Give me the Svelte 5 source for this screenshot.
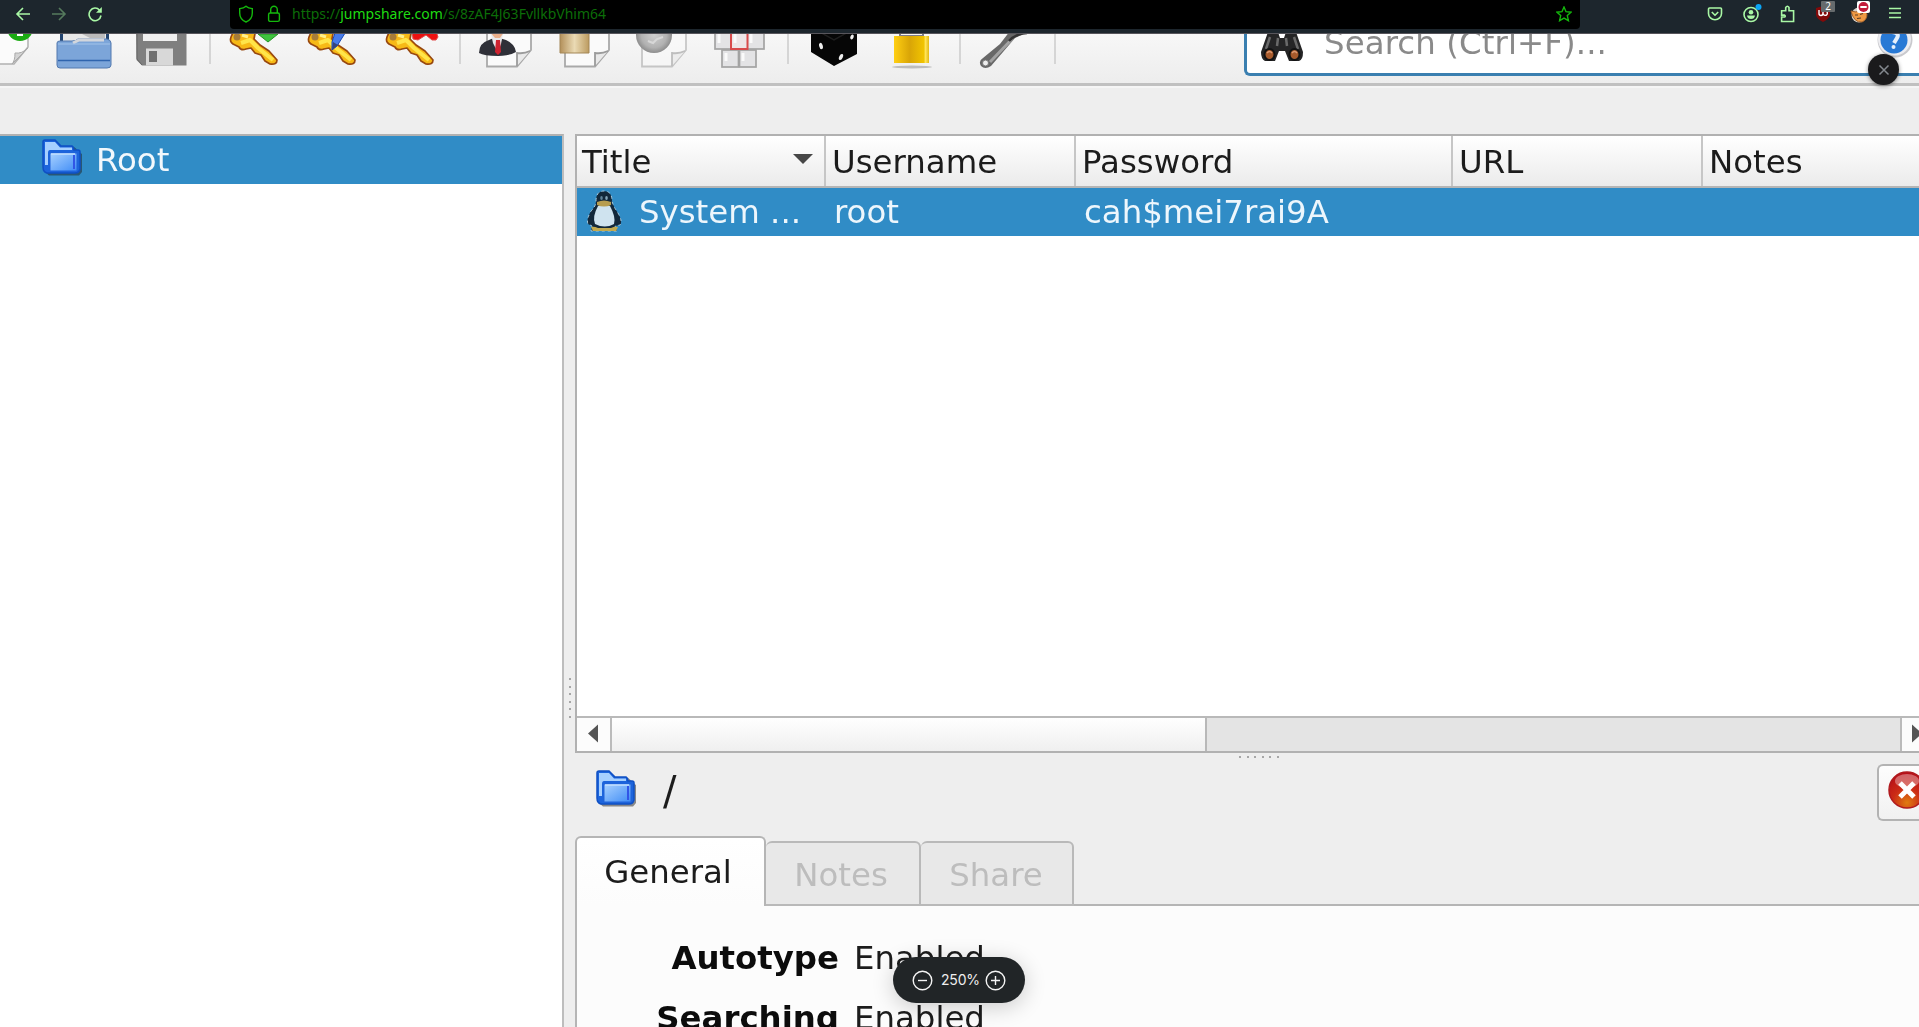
<script>
  const columns = [
    { label: 'Title', cls: 'c-title' },
    { label: 'Username', cls: 'c-user' },
    { label: 'Password', cls: 'c-pass' },
    { label: 'URL', cls: 'c-url' },
    { label: 'Notes', cls: 'c-notes' }
  ];
  const details = [
    { label: 'Autotype', value: 'Enabled' },
    { label: 'Searching', value: 'Enabled' }
  ];
  // Toolbar slots tile the row; every viewBox starts where the slot does.
  const tools = [
    { id: 'new', x: 0, w: 46 },
    { id: 'open', x: 46, w: 78 },
    { id: 'save', x: 124, w: 84 },
    { id: 'sep', x: 208, w: 4 },
    { id: 'key', mark: 'add', x: 212, w: 78 },
    { id: 'key', mark: 'edit', x: 290, w: 78 },
    { id: 'key', mark: 'delete', x: 368, w: 90 },
    { id: 'sep', x: 458, w: 4 },
    { id: 'user', x: 462, w: 80 },
    { id: 'clip', x: 542, w: 78 },
    { id: 'globe', x: 620, w: 78 },
    { id: 'type', x: 698, w: 88 },
    { id: 'sep', x: 786, w: 4 },
    { id: 'dice', x: 790, w: 84 },
    { id: 'lock', x: 874, w: 84 },
    { id: 'sep', x: 958, w: 4 },
    { id: 'wrench', x: 962, w: 91 },
    { id: 'sep', x: 1053, w: 4 }
  ];
  const dots = [0, 1, 2, 3, 4, 5];
</script>

{#snippet folder()}
  <svg class="folder" width="42" height="38" viewBox="0 0 42 38">
    <defs>
      <linearGradient id="fold" x1="0" y1="0" x2="1" y2="1">
        <stop offset="0" stop-color="#a9d2ff" /><stop offset="1" stop-color="#3f8cf6" />
      </linearGradient>
    </defs>
    <path d="M4 5Q4 4 6 4H16L21 9H33Q35 10 37 13L41 16V34L38 37.500H8L4 34Z" fill="#222" opacity=".5" />
    <path d="M2 4Q2 2 4 2H14L20 8H31Q33 9 33 12H37Q39 12 39 14V31Q38 35 34 35H6Q2 34 2 29Z" fill="#1c64dc" stroke="#0f50c4" stroke-width="1.5" />
    <path d="M4 4H14L19 9.500H31V12H9Q7 12 7 15V27H4Z" fill="#a6d0ff" />
    <path d="M9 15H36V33H9Z" fill="url(#fold)" stroke="#2162d8" />
    <path d="M10 16H34" stroke="#c3e0ff" stroke-width="1.5" />
    <path d="M33 17V31" stroke="#3155e6" stroke-width="2" />
  </svg>
{/snippet}

{#snippet page(x)}
  <path d="M{x} 30V66.5H{x + 30}L{x + 44} 50V30Z" fill="#fafafa" stroke="#a9a9a9" stroke-width="1.8" />
  <path d="M{x + 30} 66V53Q{x + 37} 54 {x + 43} 51" fill="#e9e9e9" stroke="#9b9b9b" stroke-width="1.8" />
{/snippet}

<div class="window">
  <header class="browser">
    <nav class="nav">
      <svg width="16" height="16" viewBox="0 0 16 16"><path d="M15 8H2M8 2L2 8L8 14" /></svg>
      <svg class="dim" width="16" height="16" viewBox="0 0 16 16"><path d="M1 8H14M8 2L14 8L8 14" /></svg>
      <svg width="16" height="16" viewBox="0 0 16 16"><path d="M12.6 4.2A6 6.3 0 1 0 14 9.5" /><path d="M14.8 1V6.8H9Z" class="solid" /></svg>
    </nav>
    <div class="url">
      <svg width="16" height="18" viewBox="0 0 16 18"><path d="M8 1.2C6 3 4 3.4 1.7 3.6V8C1.7 12.5 4.6 15.6 8 17C11.4 15.6 14.3 12.5 14.3 8V3.6C12 3.4 10 3 8 1.2Z" /></svg>
      <svg width="14" height="18" viewBox="0 0 14 18"><rect x="1.6" y="8" width="10.8" height="8.4" rx="1.6" /><path d="M3.7 8V4.7A3.3 3.5 0 0 1 10.3 4.7V8" /></svg>
      <span class="address">https://<b>jumpshare.com</b>/s/8zAF4J63FvllkbVhim64</span>
      <svg class="star" width="16" height="16" viewBox="0 0 16 16"><path d="M8 1L10 5.7L15 6.2L11.3 9.6L12.4 14.7L8 12.1L3.6 14.7L4.7 9.6L1 6.2L6 5.7Z" /></svg>
    </div>
    <div class="ext">
      <svg width="16" height="20" viewBox="0 0 16 20"><path d="M2.5 4H13.5Q14.5 4 14.5 5V9.5A6.5 6.2 0 0 1 1.5 9.5V5Q1.5 4 2.5 4ZM4.8 8L8 11.2L11.2 8" /></svg>
      <svg width="20" height="26" viewBox="0 0 20 26"><circle cx="9" cy="13.500" r="7" /><circle class="solid" cx="9" cy="11.2" r="2.3" /><path class="solid" d="M5 14.500H13Q12.500 18 9 18Q5.500 18 5 14.500Z" /><circle class="dot" cx="16.5" cy="6" r="3" /></svg>
      <svg width="16" height="20" viewBox="0 0 16 20"><path d="M1.6 17.500V13H4.5Q6 12.3 4.5 11.1H1.6V6.8H5.7V3.500Q7.4 1.1 9 3.500V6.8H13.6V17.500Z" /></svg>
      <div class="shield">
        <svg width="16" height="18" viewBox="0 0 16 18"><path class="red" d="M8 1L15 3V10Q14 14 8 17Q2 14 1 10V3Z" /><path class="ub" d="M4 5V8.500Q4 10.500 6 10.500Q8 10.500 8 8M8 5V8A2.2 2.2 0 1 0 10 6" /></svg>
        <span class="count">2</span>
      </div>
      <svg class="fox" width="20" height="24" viewBox="0 0 20 24"><circle cx="9" cy="14" r="7.5" style:fill="#d9d2c8" style:stroke="none" /><path style:fill="#ee9a45" style:stroke="#a56229" style:stroke-width="1" d="M1 10L6 11L12 8L17 13Q17 19 12 21Q4 22 1 10Z" /><path style:stroke="#5a3c24" style:stroke-width="1.1" d="M5 14H8M10 13.500L13 12.500M7 17.500L11 17" /><rect style:fill="#fff" style:stroke="none" x="7" y="0" width="13" height="12" rx="2" /><circle style:fill="#c21a3a" style:stroke="none" cx="13.5" cy="6" r="5" /><path style:stroke="#fff" style:stroke-width="2" d="M10.3 6H16.7" /></svg>
      <svg width="14" height="14" viewBox="0 0 14 14"><path d="M1 2.5H13M1 7H13M1 11.5H13" /></svg>
    </div>
  </header>

  <main class="viewer">
    <div class="photo">
      <div class="toolbar">
        {#each tools as t}
          <svg width={t.w} height="49" viewBox="{t.x} 34 {t.w} 49">
            {#if t.id === 'new'}
              <path d="M-10 20V64H14L28 47V20Z" fill="#fbfbfb" stroke="#b1b1b1" stroke-width="1.5" />
              <path d="M12 64Q15 61 15 53Q22 54 28 48Z" fill="#d4d4d4" stroke="#aaa" />
              <circle cx="20" cy="28" r="13" fill="#1bab12" /><path d="M20 22V36M13 29H27" stroke="#fff" stroke-width="6" />
            {:else if t.id === 'open'}
              <rect x="60" y="24" width="49" height="25" fill="#23446f" /><path d="M63 28H106V48H63Z" fill="#e8e8e8" /><path d="M82 34H105V38H90Z" fill="#bbb" />
              <path d="M57 43Q57 41 60 41H72Q76 41 78 39H107Q111 40 111 43V65Q111 68 107 68H60Q57 68 57 65Z" fill="#7ca5d9" stroke="#5279ae" />
              <path d="M73 43L79 40H104" stroke="#d3d6dc" stroke-width="3" fill="none" /><path d="M58 60.5H110" stroke="#2f64ae" stroke-width="1.5" /><path d="M58 44H110" stroke="#a3c4ea" />
            {:else if t.id === 'save'}
              <path d="M136 25H186.500V65.500H142L136.500 60Z" fill="#7f7f7f" /><path d="M137 25V59L142 65" stroke="#666" fill="none" />
              <rect x="143" y="25" width="34" height="16" fill="#efefef" /><rect x="146" y="48.500" width="27" height="17" fill="#d8d8d8" /><rect x="149" y="51" width="8" height="11" fill="#707070" />
            {:else if t.id === 'sep'}
              <path d="M{t.x + 2} 34V64" stroke="#cbcbcb" stroke-width="1.5" />
            {:else if t.id === 'key'}
              <g transform="translate({t.x} 34)">
                {#if t.mark === 'add'}<path d="M46 0H66L56 8Z" fill="#3fc33f" stroke="#239323" />{/if}
                {#if t.mark === 'delete'}<path d="M44 -3H68L70 3L68 6L64 6L58 1L50 6L45 5Z" fill="#ec1111" stroke="#e04a4a" />{/if}
                <path d="M24 -8L19 3Q17 9 23 11L27 13Q29 17 34 15L39 14L43 19L49 21L53 27L58 30Q65 31 65 26L57 17L48 11L42 5L44 -6Z" fill="#f7b916" stroke="#98480f" stroke-width="1.700" stroke-linejoin="round" />
                <path d="M29 9L38 6L46 14L61 26" stroke="#ffe54a" stroke-width="4" fill="none" stroke-linejoin="round" /><circle cx="25" cy="3" r="3.500" fill="#a77c38" /><path d="M30 1L36 3" stroke="#fff08a" stroke-width="3" />
                {#if t.mark === 'edit'}<path d="M46 -4H57L47 12L42 16V8Z" fill="#477bea" stroke="#1749b5" /><path d="M42 16L43 8L48 11Z" fill="#36457b" />{/if}
              </g>
            {:else if t.id === 'user'}
              {@render page(487)}
              <path d="M479 53Q479 43 489 40L496 37L506 40Q515 44 516 52Q510 56 498 56Q484 56 479 53Z" fill="#2f3038" /><path d="M491 34H503L501 44L498 53L493 43Z" fill="#e8e8ea" /><path d="M496 40H500L501 52L498 55L495 52Z" fill="#cf2330" /><path d="M490 32H504L500 38H495Z" fill="#e9af8b" />
            {:else if t.id === 'clip'}
              {@render page(565)}
              <defs><linearGradient id="tan"><stop offset="0" stop-color="#b3905a" /><stop offset=".5" stop-color="#eadab4" /><stop offset="1" stop-color="#bc9b60" /></linearGradient></defs>
              <path d="M560 24H589V53H560Z" fill="url(#tan)" stroke="#a38657" />
            {:else if t.id === 'globe'}
              <g opacity=".6">{@render page(642)}</g>
              <defs><radialGradient id="ball"><stop offset="0" stop-color="#cfcfcf" /><stop offset=".7" stop-color="#b2b2b2" /><stop offset="1" stop-color="#8d8d8d" /></radialGradient></defs>
              <circle cx="654" cy="35" r="18" fill="url(#ball)" /><path d="M648 41L653 43L657 39L663 37" stroke="#d8d8d8" stroke-width="2" fill="none" />
            {:else if t.id === 'type'}
              <g fill="#e3e3e5" stroke="#a3a3a3" stroke-width="1.700"><rect x="715" y="29" width="17" height="20" /><rect x="747" y="29" width="17" height="20" /><rect x="722" y="50" width="16.500" height="17" /><rect x="739.500" y="50" width="16.500" height="17" /></g>
              <rect x="731" y="29" width="16.500" height="20" fill="#eee5e6" stroke="#d84a4b" stroke-width="2" /><path d="M719 34V43M726 53V61M743 53V61M751 34V43M735 34V43" stroke="#fafafa" stroke-width="3" />
            {:else if t.id === 'dice'}
              <path d="M811 25L834 34L857 25V54L834 66L811 52Z" fill="#060606" /><path d="M811 27L834 40L857 27" stroke="#1e1e1e" stroke-width="1.500" fill="none" />
              <g fill="#eee"><ellipse cx="821" cy="46" rx="1.800" ry="3.200" transform="rotate(-15 821 46)" /><ellipse cx="841" cy="57" rx="1.800" ry="3.200" transform="rotate(25 841 57)" /><ellipse cx="852" cy="37" rx="1.600" ry="2.500" transform="rotate(25 852 37)" /></g>
            {:else if t.id === 'lock'}
              <defs><linearGradient id="gold"><stop offset="0" stop-color="#ffcf12" /><stop offset=".45" stop-color="#d9a507" /><stop offset=".85" stop-color="#f1c400" /><stop offset=".9" stop-color="#ffe45a" /><stop offset="1" stop-color="#e3b913" /></linearGradient></defs>
              <path d="M900 31V36H923V31" fill="none" stroke="#7e7d8b" stroke-width="2" /><rect x="894" y="36" width="35" height="27" fill="url(#gold)" /><ellipse cx="912" cy="67" rx="20" ry="1.500" fill="#bdbdbd" />
            {:else if t.id === 'wrench'}
              <path d="M1010 31H1030L1015 38L991 66Q985 70 981 66Q978 61 983 58L1000 44Z" fill="#686868" /><path d="M1013 38L990 62" stroke="#a2a2a2" stroke-width="3" /><path d="M1027 33Q1015 34 1009 41" stroke="#333" stroke-width="2.500" fill="none" /><circle cx="985.500" cy="63" r="3" fill="#eee" stroke="#777" />
            {/if}
          </svg>
        {/each}
        <div class="search">
          <svg class="binoculars" width="44" height="32" viewBox="0 0 44 32">
            <path d="M8 -2H18L20 4H24L26 -2H36L43 18Q43 26 39 27H29L25 17H19L15 27H5Q1 25 1 18Z" fill="#252526" /><path d="M10 3L6 15M34 3L38 15M18 4L17 12M26 4L27 12" stroke="#6a6a6a" stroke-width="2.500" /><ellipse cx="9.500" cy="20.500" rx="5" ry="5.500" fill="#a65a2c" stroke="#121212" stroke-width="2" /><ellipse cx="34.500" cy="20.500" rx="5" ry="5.500" fill="#a65a2c" stroke="#121212" stroke-width="2" /><path d="M7 19Q9.500 16 12 19M32 19Q34.500 16 37 19" stroke="#dc9a72" fill="none" stroke-width="1.500" />
          </svg>
          <span>Search (Ctrl+F)...</span>
          <svg class="help" width="44" height="30" viewBox="0 0 44 30">
            <circle cx="22" cy="6" r="17.500" fill="#c9c9cd" /><circle cx="21.500" cy="5" r="16.500" fill="#ededf1" /><circle cx="21" cy="6" r="13.500" fill="#2879d5" /><path d="M19 -2Q27 -1 24 4L21 9" stroke="#e6f0fc" stroke-width="4" fill="none" /><circle cx="20.500" cy="13" r="2" fill="#e6f0fc" />
          </svg>
        </div>
      </div>

      <div class="split">
        <aside class="groups">
          <div class="group">{@render folder()}<span>Root</span></div>
        </aside>
        <div class="grip-v">{#each dots as d}<i></i>{/each}</div>
        <section class="right">
          <div class="table">
            <div class="head">
              {#each columns as c}
                <div class="cell {c.cls}"><span>{c.label}</span>{#if c.label === 'Title'}<svg width="20" height="10" viewBox="0 0 20 10"><path d="M0 0H20L10 10Z" fill="#474747" /></svg>{/if}</div>
              {/each}
            </div>
            <div class="row">
              <div class="cell c-title">
                <svg class="tux" width="36" height="42" viewBox="0 0 36 42">
                  <path d="M10 11Q10 1 18 1Q26 1 26 11Q27 16 32 23Q37 32 34 35L29 36L31 41H5L6 36L2 34Q0 30 5 21Q10 16 10 11Z" fill="#13283a" stroke="#a9c9dc" stroke-width="1" stroke-dasharray="3 3" />
                  <path d="M12 16Q18 13 24 16Q30 27 28 34Q19 39 9 34Q6 27 12 16Z" fill="#cfe3ef" /><ellipse cx="15.500" cy="8" rx="1.300" ry="2" fill="#5f8298" /><ellipse cx="20.500" cy="8" rx="1.300" ry="2" fill="#86a6b8" /><path d="M11 12Q18 9 25 12V15Q18 18 11 15Z" fill="#b79d4f" /><path d="M5 37Q8 36 12 38H25Q29 36 32 37L30 41H7Z" fill="#c2a94e" />
                </svg>
                <span>System ...</span>
              </div>
              <div class="cell c-user"><span>root</span></div>
              <div class="cell c-pass"><span>cah$mei7rai9A</span></div>
            </div>
            <div class="empty"></div>
            <div class="scroll">
              <div class="arrow"><svg width="10" height="19" viewBox="0 0 11 20"><path d="M11 0V20L0 10Z" fill="#555" /></svg></div>
              <div class="thumb"></div>
              <div class="groove"></div>
              <div class="arrow last"><svg width="10" height="19" viewBox="0 0 11 20"><path d="M0 0V20L11 10Z" fill="#555" /></svg></div>
            </div>
          </div>
          <div class="grip-h">{#each dots as d}<i></i>{/each}</div>
          <div class="path">
            {@render folder()}
            <span>/</span>
            <div class="close-pane">
              <svg width="40" height="40" viewBox="0 0 40 40">
                <defs><radialGradient id="warm" cx=".5" cy=".85" r=".8"><stop offset="0" stop-color="#e07c10" /><stop offset=".5" stop-color="#cb2b16" /><stop offset="1" stop-color="#b80f18" /></radialGradient></defs>
                <circle cx="20" cy="20" r="18" fill="url(#warm)" stroke="#b01a1e" stroke-width="1.500" /><ellipse cx="20" cy="11" rx="12" ry="7" fill="#fff" opacity=".35" /><path d="M13 13L27 27M27 13L13 27" stroke="#fff" stroke-width="5" />
              </svg>
            </div>
          </div>
          <div class="tabs">
            <div class="tab active">General</div>
            <div class="tab notes">Notes</div>
            <div class="tab share">Share</div>
            <div class="rest"></div>
          </div>
          <div class="panel">
            {#each details as d}
              <div class="detail"><strong>{d.label}</strong><span>{d.value}</span></div>
            {/each}
          </div>
        </section>
      </div>
    </div>

    <button class="close" aria-label="Close"><svg width="12" height="12" viewBox="0 0 12 12"><path d="M1.500 1.500L10.500 10.500M10.500 1.500L1.500 10.500" stroke="#84898f" stroke-width="1.500" /></svg></button>
    <div class="zoom">
      <svg width="21" height="21" viewBox="0 0 21 21"><circle cx="10.500" cy="10.500" r="9.300" /><path d="M6 10.500H15" /></svg>
      <span>250%</span>
      <svg width="21" height="21" viewBox="0 0 21 21"><circle cx="10.500" cy="10.500" r="9.300" /><path d="M6 10.500H15M10.500 6V15" /></svg>
    </div>
  </main>
</div>

<style>
  :global(body) { margin: 0; overflow: hidden; background: #eee; }
  .window { width: 1919px; height: 1027px; display: flex; flex-direction: column; overflow: hidden; }
  svg { display: block; flex: none; }

  .browser { height: 33px; flex: none; display: flex; background: #1d262d; border-bottom: 1px solid #57555b; font-family: "Noto Sans", sans-serif; }
  .browser svg { fill: none; stroke: #a9f8a5; stroke-width: 1.6; }
  .browser .solid { fill: #a9f8a5; stroke: none; }
  .browser .dot { fill: #0aa5f5; stroke: none; }
  .browser .red { fill: #820a0a; stroke: none; }
  .browser .ub { stroke: #fff; stroke-width: 1.4; }
  .nav { width: 215px; padding-left: 15px; display: flex; gap: 20px; height: 27px; align-items: center; }
  .browser .dim { opacity: .4; }
  .url { width: 1334px; height: 29px; background: #000; border-radius: 0 0 4px 4px; padding: 0 8px; display: flex; align-items: center; }
  .browser .url svg { stroke: #14b80c; stroke-width: 1.4; margin-bottom: 2px; }
  .url svg + svg { margin-left: 13px; }
  .address { margin-left: 11px; color: #0c6d08; font-size: 14px; line-height: 27px; height: 29px; flex: 1; white-space: nowrap; }
  .address b { font-weight: 400; color: #1fdc12; }
  .ext { flex: 1; height: 27px; display: flex; align-items: center; padding-left: 127px; gap: 20px; }
  .ext svg:nth-child(2) { margin-left: -1px; }
  .ext svg:nth-child(3) { margin-left: -2px; }
  .ext .shield { margin-left: -1px; }
  .ext .fox { margin-left: -1px; margin-bottom: 2px; }
  .ext > svg:last-child { margin-left: -2px; margin-bottom: 1px; }
  .shield { position: relative; }
  .count { position: absolute; left: 6px; top: -4px; width: 14px; height: 11px; border-radius: 1px; background: #666b6d; color: #fff; font-size: 10px; line-height: 10px; text-align: center; }

  .viewer { position: relative; height: 993px; flex: none; overflow: hidden; background: #eee; }
  .photo { height: 993px; display: flex; flex-direction: column; font-family: "DejaVu Sans", sans-serif; font-size: 32.4px; color: #1c1c1c; white-space: nowrap; filter: blur(.7px); }
  .toolbar { height: 49px; flex: none; display: flex; background: linear-gradient(#f7f7f7, #ededed); border-bottom: 3px solid #c0c0c0; box-shadow: 0 2px #f5f5f5; }
  .search { margin-left: 187px; height: 39px; flex: 1; border: 3px solid #3a7fb0; border-top: 0; border-right: 0; border-radius: 0 0 0 6px; background: #fff; display: flex; color: #8a8a8a; }
  .binoculars { margin-left: 13px; }
  .search span { margin-left: 20px; line-height: 40px; margin-top: -11px; height: 38px; flex: 1; letter-spacing: .1px; }
  .help { margin-right: 2px; }

  .split { margin-top: 48px; flex: 1; display: flex; min-height: 0; }
  .groups { width: 562px; border-top: 2px solid #b1b1b1; border-right: 2px solid #bdbdbd; background: #fff; }
  .group { height: 48px; background: #308cc6; color: #f2f8fc; display: flex; line-height: 48px; padding-left: 41px; }
  .group .folder { margin-top: 2px; }
  .group span { margin-left: 13px; }
  .grip-v { width: 11px; padding-top: 544px; display: flex; flex-direction: column; align-items: center; gap: 5.6px; }
  .grip-v i, .grip-h i { width: 2px; height: 2px; background: #a6a6a6; flex: none; }
  .right { flex: 1; min-width: 0; display: flex; flex-direction: column; }
  .table { border: 2px solid #b1b1b1; border-right: 0; height: 615px; flex: none; display: flex; flex-direction: column; background: #fff; }
  .head { height: 50px; flex: none; display: flex; background: linear-gradient(#fff, #ebebeb); border-bottom: 2px solid #b5b5b5; }
  .head span { margin-top: 2px; }
  .cell { display: flex; align-items: center; box-sizing: border-box; }
  .head .cell { padding-left: 6px; border-right: 2px solid #c6c6c6; }
  .head .c-title { padding-left: 5px; }
  .head svg { margin: 0 11px 5px auto; }
  .c-title { width: 249px; }
  .c-user { width: 250px; }
  .c-pass { width: 377px; }
  .c-url { width: 250px; }
  .head .c-notes { flex: 1; border: 0; }
  .row { height: 48px; flex: none; display: flex; background: #308cc6; color: #edf6fc; }
  .row .c-title { padding-left: 9px; }
  .tux { margin: 0 17px 2px 0; }
  .row .c-user, .row .c-pass { padding-left: 8px; }
  .empty { flex: 1; }
  .scroll { height: 33px; flex: none; border-top: 2px solid #b9b9b9; display: flex; }
  .arrow { width: 31px; padding-right: 2px; border-right: 2px solid #bbb; background: #fcfcfc; display: flex; align-items: center; justify-content: center; }
  .arrow svg { margin-bottom: 2px; }
  .thumb { width: 593px; background: linear-gradient(#fff, #efefef); border-right: 2px solid #b8b8b8; }
  .groove { flex: 1; background: #e4e4e4; }
  .last { width: 7px; border-right: 0; border-left: 2px solid #bbb; justify-content: flex-start; padding: 0 0 0 10px; }
  .grip-h { height: 9px; flex: none; padding: 3px 0 0 664px; box-sizing: border-box; display: flex; gap: 5.6px; }
  .path { height: 56px; flex: none; margin-top: 2px; padding-left: 20px; display: flex; }
  .path .folder { margin-top: 5px; }
  .path span { margin-left: 26px; font-size: 40px; line-height: 54px; }
  .close-pane { margin-left: auto; width: 40px; height: 53px; border: 2px solid #b3b3b3; border-right: 0; border-radius: 6px 0 0 6px; background: linear-gradient(#fdfdfd, #f1f1f1); overflow: hidden; }
  .close-pane svg { margin: 4px 0 0 8px; }
  .tabs { height: 70px; flex: none; margin-top: 16px; display: flex; align-items: flex-end; }
  .tab { box-sizing: border-box; border: 2px solid #b9b9b9; height: 65px; background: #e8e8e8; color: #bdbdbd; border-radius: 6px 6px 0 0; line-height: 64px; text-align: center; border-left: 0; padding-right: 3px; }
  .tab.active { width: 191px; height: 70px; border: 2px solid #b5b5b5; border-bottom: 0; background: linear-gradient(#fff, #fcfcfc); color: #1c1c1c; line-height: 69px; padding-right: 5px; }
  .tab.notes { width: 155px; }
  .tab.share { width: 153px; padding-right: 1px; }
  .rest { flex: 1; border-bottom: 2px solid #b5b5b5; }
  .panel { flex: 1; border-left: 2px solid #b5b5b5; background: #fcfcfc; padding-top: 22px; }
  .detail { height: 60px; line-height: 60px; display: flex; gap: 15px; }
  .detail strong { width: 262px; text-align: right; color: #0c0c0c; }

  .close { position: absolute; left: 1868px; top: 20px; width: 31px; height: 31px; padding: 0; border: 0; border-radius: 50%; background: #1a1a1c; box-shadow: 0 1px 4px #0007; display: flex; align-items: center; justify-content: center; }
  .zoom { position: absolute; left: 893px; top: 923px; width: 132px; height: 46px; border-radius: 23px; background: #212527; box-shadow: 0 4px 22px #0003; display: flex; align-items: center; justify-content: center; gap: 8px; color: #eee; font: 14px/46px Inter, sans-serif; }
  .zoom span { width: 36px; text-align: center; letter-spacing: -.2px; }
  .zoom svg { fill: none; stroke: #f4f4f4; stroke-width: 1.4; }
</style>
